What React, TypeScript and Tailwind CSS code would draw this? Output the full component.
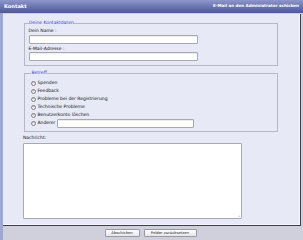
import React from "react";

const Radio = ({ label, children }: { label: string; children?: React.ReactNode }) => (
  <div className="flex items-center h-[8px]">
    <span className="w-[5px] h-[5px] rounded-full border-[0.5px] border-[#808080] bg-linear-to-b from-[#e4e4e4] to-white shadow-[inset_0_0.5px_0.5px_rgba(0,0,0,0.3)]" />
    <span className="ml-[1.5px] leading-none">{label}</span>
    {children}
  </div>
);

export default function App() {
  return (
    <div className="w-[303px] h-[240px] flex flex-col bg-[#cfd0dc] font-['DejaVu_Sans',Verdana,sans-serif] text-[#111] overflow-hidden">
      <div className="h-[13px] shrink-0 bg-linear-to-b from-[#8e97cc] to-[#4c5795] flex items-center justify-between pl-[4px] pr-[4px]">
        <span className="text-white font-bold text-[5.1px] leading-none">Kontakt</span>
        <span className="text-white font-bold text-[4.1px] leading-none">E-Mail an den Administrator schicken</span>
      </div>
      <div className="flex flex-1">
        <div className="w-[3px] bg-[#9ea6d8] shrink-0" />
        <div className="flex-1 flex flex-col">
          <div className="h-[212px] mt-[1px] mr-[2px] bg-[#e7e9f7] border-r-[1.5px] border-b-[1.5px] border-[#3c3f4e] shadow-[inset_-1px_-1px_0_#f4f5fc] pt-[7px] pl-[21px] text-[4.5px]">
            <fieldset className="w-[254px] h-[45px] border-[0.75px] border-[#b7b8c6] pl-[3.5px] pt-[1px] m-0">
              <legend className="text-[#3b3bd0] px-[0.5px] leading-none">Deine Kontaktdaten</legend>
              <div className="leading-none mt-[2.5px]">Dein Name :</div>
              <div className="w-[169px] h-[9px] mt-[1px] bg-white border-[0.75px] border-[#a8a8b4] shadow-[inset_0_0.5px_0.5px_rgba(0,0,0,0.15)] rounded-[1px]" />
              <div className="leading-none mt-[3px]">E-Mail-Adresse :</div>
              <div className="w-[169px] h-[9px] mt-[1px] bg-white border-[0.75px] border-[#a8a8b4] shadow-[inset_0_0.5px_0.5px_rgba(0,0,0,0.15)] rounded-[1px]" />
            </fieldset>
            <fieldset className="w-[254px] h-[61px] mt-[5px] border-[0.75px] border-[#b7b8c6] pl-[6px] pt-[4px] m-0">
              <legend className="text-[#3b3bd0] px-[0.5px] leading-none">Betreff</legend>
              <Radio label="Spenden" />
              <Radio label="Feedback" />
              <Radio label="Probleme bei der Registrierung" />
              <Radio label="Technische Probleme" />
              <Radio label="Benutzerkonto löschen" />
              <Radio label="Anderer">
                <span className="ml-[2px] w-[137px] h-[9px] bg-white border-[0.75px] border-[#a8a8b4] shadow-[inset_0_0.5px_0.5px_rgba(0,0,0,0.15)] rounded-[1px]" />
              </Radio>
            </fieldset>
            <div className="leading-none mt-[4px] -ml-[1px]">Nachricht:</div>
            <div className="relative w-[219px] h-[76px] mt-[2px] -ml-[1px] bg-white border-[0.75px] border-[#a8a8b4] rounded-[1px]">
              <span className="absolute right-[1px] bottom-[1px] w-[3px] h-[3px] bg-linear-to-br from-transparent via-transparent to-[#bbb]" />
            </div>
          </div>
          <div className="flex-1 flex items-center justify-center gap-[4px] pr-[5px]">
            <button className="h-[8px] w-[35px] bg-linear-to-b from-white to-[#e6e6ea] border-[0.75px] border-[#9a9aa6] rounded-[1px] text-[3.8px] leading-none text-[#222]">Abschicken</button>
            <button className="h-[8px] w-[53px] bg-linear-to-b from-white to-[#e6e6ea] border-[0.75px] border-[#9a9aa6] rounded-[1px] text-[3.8px] leading-none text-[#222]">Felder zurücksetzen</button>
          </div>
        </div>
      </div>
    </div>
  );
}
